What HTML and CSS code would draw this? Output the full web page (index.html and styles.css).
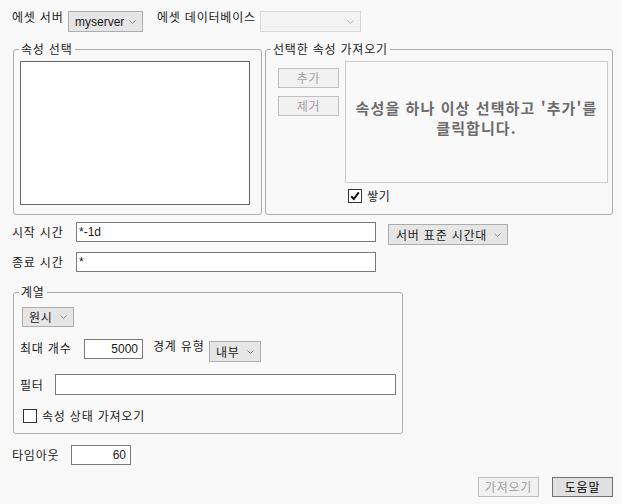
FILE: index.html
```html
<!DOCTYPE html>
<html lang="ko">
<head>
<meta charset="utf-8">
<link rel="stylesheet" href="styles.css">
</head>
<body>
<div class="dlg">
  <div class="row-top">
    <span class="lbl lbl-server">에셋 서버</span>
    <div class="sel sel-server"><span class="lat">myserver</span><svg class="chev" width="7" height="4" viewBox="0 0 7 4"><polyline points="0.5,0.5 3.5,3.5 6.5,0.5" fill="none" stroke="#8a8a8a" stroke-width="1"/></svg></div>
    <span class="lbl lbl-db">에셋 데이터베이스</span>
    <div class="sel sel-db"><span></span><svg class="chev" width="7" height="4" viewBox="0 0 7 4"><polyline points="0.5,0.5 3.5,3.5 6.5,0.5" fill="none" stroke="#b5b5b5" stroke-width="1"/></svg></div>
  </div>

  <div class="groups">
    <fieldset class="grp grp-attr">
      <legend>속성 선택</legend>
      <div class="listbox"></div>
    </fieldset>
    <fieldset class="grp grp-sel">
      <legend>선택한 속성 가져오기</legend>
      <div class="sel-body">
        <div class="btn-col">
          <div class="btn btn-off">추가</div>
          <div class="btn btn-off">제거</div>
        </div>
        <div class="msg-col">
          <div class="msg">속성을 하나 이상 선택하고 '추가'를<br>클릭합니다.</div>
          <div class="chk chk-stack">
            <span class="box"><svg width="12" height="12" viewBox="0 0 12 12"><path d="M2.2 6.2 L4.8 9 L9.8 2.4" fill="none" stroke="#111" stroke-width="2"/></svg></span>
            <span>쌓기</span>
          </div>
        </div>
      </div>
    </fieldset>
  </div>

  <div class="row-time">
    <span class="lbl lbl-time">시작 시간</span>
    <div class="txt txt-time"><span class="lat">*-1d</span></div>
    <div class="sel sel-tz"><span>서버 표준 시간대</span><svg class="chev" width="7" height="4" viewBox="0 0 7 4"><polyline points="0.5,0.5 3.5,3.5 6.5,0.5" fill="none" stroke="#8a8a8a" stroke-width="1"/></svg></div>
  </div>
  <div class="row-time2">
    <span class="lbl lbl-time">종료 시간</span>
    <div class="txt txt-time"><span class="lat">*</span></div>
  </div>

  <fieldset class="grp grp-series">
    <legend>계열</legend>
    <div class="sel sel-raw"><span>원시</span><svg class="chev" width="7" height="4" viewBox="0 0 7 4"><polyline points="0.5,0.5 3.5,3.5 6.5,0.5" fill="none" stroke="#8a8a8a" stroke-width="1"/></svg></div>
    <div class="row-max">
      <span class="lbl lbl-max">최대 개수</span>
      <div class="txt txt-max"><span class="lat">5000</span></div>
      <span class="lbl lbl-bound">경계 유형</span>
      <div class="sel sel-bound"><span>내부</span><svg class="chev" width="7" height="4" viewBox="0 0 7 4"><polyline points="0.5,0.5 3.5,3.5 6.5,0.5" fill="none" stroke="#8a8a8a" stroke-width="1"/></svg></div>
    </div>
    <div class="row-filter">
      <span class="lbl lbl-filter">필터</span>
      <div class="txt txt-filter"></div>
    </div>
    <div class="chk chk-state">
      <span class="box"></span>
      <span>속성 상태 가져오기</span>
    </div>
  </fieldset>

  <div class="row-timeout">
    <span class="lbl lbl-timeout">타임아웃</span>
    <div class="txt txt-timeout"><span class="lat">60</span></div>
  </div>

  <div class="footer">
    <div class="btn btn-off btn-foot">가져오기</div>
    <div class="btn btn-help btn-foot">도움말</div>
  </div>
</div>
</body>
</html>
```

FILE: styles.css
```css
html, body {
  margin: 0;
  background: #f9f9f9;
}
body {
  font-family: "Noto Sans CJK KR", sans-serif;
  font-size: 12px;
  line-height: 16px;
  letter-spacing: 0.8px;
  color: #1a1a1a;
}
.dlg {
  box-sizing: border-box;
  width: 622px;
  height: 504px;
  padding: 9px 0 0 12px;
  overflow: hidden;
}
.lat {
  font-family: "Liberation Sans", "Noto Sans CJK KR", sans-serif;
  letter-spacing: 0;
}
.lbl {
  display: block;
  flex: none;
  white-space: nowrap;
}

/* selects */
.sel {
  box-sizing: border-box;
  display: flex;
  align-items: center;
  justify-content: space-between;
  flex: none;
  height: 21px;
  border: 1px solid #adadad;
  background: #e6e6e6;
  padding: 0 6px 0 6px;
  white-space: nowrap;
}
.chev {
  flex: none;
  display: block;
}

/* top row */
.row-top {
  display: flex;
  align-items: flex-start;
  height: 33px;
}
.lbl-server { width: 56px; }
.sel-server { width: 75px; margin-top: 2px; padding-right: 6px; }
.lbl-db { width: 103px; margin-left: 14px; }
.sel-db {
  width: 101px;
  margin-top: 2px;
  background: #f3f3f3;
  border-color: #d8d8d8;
}

/* group boxes */
.groups {
  display: flex;
  gap: 3px;
  margin-left: 1px;
}
.grp {
  box-sizing: border-box;
  margin: 0;
  padding: 0;
  min-width: 0;
  border: 1px solid #ababab;
  border-radius: 3px;
}
.grp legend {
  padding: 0 2px;
  margin-left: 5px;
  line-height: 14px;
}
.grp-attr { width: 249px; height: 173px; }
.grp-sel { width: 348px; height: 173px; }

.listbox {
  box-sizing: border-box;
  width: 230px;
  height: 144px;
  margin: 5px 0 0 6px;
  border: 1px solid #666;
  background: #fff;
}

.sel-body {
  display: flex;
  align-items: flex-start;
}
.btn-col {
  display: flex;
  flex-direction: column;
  gap: 8px;
  margin: 12px 0 0 12px;
}
.btn {
  box-sizing: border-box;
  width: 61px;
  height: 20px;
  border: 1px solid #c0c0c0;
  background: #f1f1f1;
  color: #a2a2a2;
  text-align: center;
  line-height: 18px;
}
.msg-col {
  margin: 5px 0 0 6px;
}
.msg {
  box-sizing: border-box;
  width: 263px;
  height: 122px;
  padding-bottom: 8px;
  border: 1px solid #cacaca;
  display: flex;
  align-items: center;
  justify-content: center;
  text-align: center;
  font-size: 15px;
  font-weight: bold;
  line-height: 20px;
  letter-spacing: 1.1px;
  color: #6c6c6c;
}

.chk {
  display: flex;
  align-items: center;
  gap: 5px;
  height: 14px;
}
.box {
  box-sizing: border-box;
  width: 14px;
  height: 14px;
  border: 1px solid #333;
  background: #fff;
  display: flex;
  align-items: center;
  justify-content: center;
}
.chk-stack { margin: 6px 0 0 3px; }

/* time rows */
.row-time {
  display: flex;
  align-items: flex-start;
  margin-top: 7px;
  height: 30px;
}
.row-time2 {
  display: flex;
  align-items: flex-start;
  height: 20px;
}
.lbl-time { width: 64px; line-height: 20px; }
.txt {
  box-sizing: border-box;
  flex: none;
  height: 20px;
  border: 1px solid #7a7a7a;
  background: #fff;
  padding: 0 2px 0 2px;
  line-height: 15px;
  white-space: nowrap;
}
.txt-time { width: 300px; }
.sel-tz { width: 120px; margin: 2px 0 0 12px; padding-left: 7px; }

/* series group */
.grp-series {
  width: 390px;
  height: 149px;
  margin: 13px 0 0 1px;
}
.sel-raw { width: 52px; height: 20px; margin: 8px 0 0 8px; }
.row-max {
  display: flex;
  align-items: flex-start;
  margin: 12px 0 0 6px;
}
.lbl-max { width: 64px; line-height: 18px; }
.txt-max { width: 59px; text-align: right; padding-right: 4px; }
.lbl-bound { width: 56px; margin-left: 10px; line-height: 14px; }
.sel-bound { width: 52px; margin-top: 2px; }
.row-filter {
  display: flex;
  align-items: center;
  margin: 12px 0 0 6px;
}
.lbl-filter { width: 35px; line-height: 18px; }
.txt-filter { width: 341px; height: 21px; }
.chk-state { margin: 14px 0 0 9px; }

/* timeout */
.row-timeout {
  display: flex;
  align-items: center;
  margin-top: 11px;
}
.lbl-timeout { width: 59px; }
.txt-timeout { width: 60px; text-align: right; padding-right: 4px; }

/* footer */
.footer {
  display: flex;
  justify-content: flex-end;
  gap: 13px;
  margin: 12px 9px 0 0;
}
.btn-help {
  background: #e1e1e1;
  border-color: #707070;
  color: #000;
}
```
